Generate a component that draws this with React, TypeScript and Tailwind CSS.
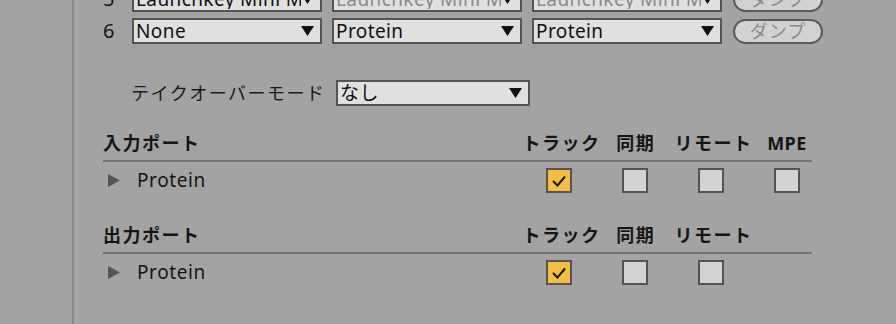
import React from "react";

const FONT = { fontFamily: '"Noto Sans", "Noto Sans CJK JP", sans-serif' };

function Arrow() {
	return (
		<svg width="13" height="10" viewBox="0 0 13 10" className="shrink-0">
			<polygon points="0,0 13,0 6.5,10" fill="#111" />
		</svg>
	);
}

function Combo({ label, dim, w = "w-[190px]" }: { label: string; dim?: boolean; w?: string }) {
	return (
		<div
			className={`${w} flex h-[26px] items-center justify-between border-2 border-[#545454] bg-[#e0e0e0] pl-[2px] pr-[6px]`}
		>
			<span
				className={`min-w-0 flex-1 overflow-hidden whitespace-nowrap text-[19px] leading-none tracking-[0.4px] ${dim ? "text-[#8a8a8a]" : "text-[#111]"}`}
			>
				{label}
			</span>
			<Arrow />
		</div>
	);
}

function DumpButton() {
	return (
		<div className="flex h-[25px] w-[90px] items-center justify-center rounded-full border-2 border-[#5a5a5a] bg-[#d2d2d2] text-[18px] leading-none tracking-[1px] text-[#8a8a8a]">
			ダンプ
		</div>
	);
}

function Check({ on }: { on?: boolean }) {
	return (
		<div
			className={`flex h-[25px] w-[26px] items-center justify-center border-2 border-[#545454] ${on ? "bg-[#f5bd42]" : "bg-[#d3d3d3]"}`}
		>
			{on && (
				<svg width="16" height="14" viewBox="0 0 16 14">
					<polyline points="2,7 6.5,11.5 14,2.5" fill="none" stroke="#1a1a1a" strokeWidth="2" />
				</svg>
			)}
		</div>
	);
}

function PortSection({ title, cols, checks }: { title: string; cols: string[]; checks: boolean[] }) {
	return (
		<div className="flex flex-col">
			<div className="flex h-[24px] items-center">
				<div className="w-[418px] text-[18px] font-bold tracking-[1.5px] text-[#151515]">{title}</div>
				{cols.map((c) => (
					<div
						key={c}
						className={`w-[76px] text-center text-[18px] font-bold whitespace-nowrap text-[#151515] ${c === "MPE" ? "tracking-[0.5px]" : "pl-[1.5px] tracking-[1.5px]"}`}
					>
						{c}
					</div>
				))}
			</div>
			<div className="mt-[5px] h-[2px] w-[709px] bg-[#737373]" />
			<div className="mt-[6px] flex h-[25px] items-center">
				<div className="flex w-[418px] items-center">
					<svg width="12" height="13" viewBox="0 0 12 13" className="ml-[5px]">
						<polygon points="0,0 12,6.5 0,13" fill="#555" />
					</svg>
					<span className="ml-[17px] text-[19px] tracking-[0.6px] text-[#151515]">Protein</span>
				</div>
				{checks.map((on, i) => (
					<div key={i} className="flex w-[76px] justify-center">
						<Check on={on} />
					</div>
				))}
			</div>
		</div>
	);
}

export default function App() {
	return (
		<div className="flex h-[324px] w-[896px] overflow-hidden bg-[#a3a3a3]" style={FONT}>
			<div className="w-[74px] shrink-0 border-r-2 border-[#8a8a8a]" />
			<div className="flex flex-col pl-[29px]">
				<div className="-mt-[14px] flex flex-col gap-[6px]">
					{[
						{ n: "5", a: "Launchkey Mini MK3", b: "Launchkey Mini MK3", c: "Launchkey Mini MK3", dim: true },
						{ n: "6", a: "None", b: "Protein", c: "Protein", dim: false },
					].map((r) => (
						<div key={r.n} className="flex items-center">
							<div className="w-[13px] text-[20px] leading-none text-[#151515]">{r.n}</div>
							<div className="ml-[16px] flex items-center gap-[10px]">
								<Combo label={r.a} />
								<Combo label={r.b} dim={r.dim} />
								<Combo label={r.c} dim={r.dim} />
							</div>
							<div className="ml-[11px]">
								<DumpButton />
							</div>
						</div>
					))}
				</div>
				<div className="mt-[36px] flex items-center pl-[28px]">
					<span className="w-[195px] whitespace-nowrap text-[18px] leading-none tracking-[1.5px] text-[#1a1a1a]">
						テイクオーバーモード
					</span>
					<div className="ml-[10px]">
						<Combo label="なし" w="w-[194px]" />
					</div>
				</div>
				<div className="mt-[25px]">
					<PortSection title="入力ポート" cols={["トラック", "同期", "リモート", "MPE"]} checks={[true, false, false, false]} />
				</div>
				<div className="mt-[30px]">
					<PortSection title="出力ポート" cols={["トラック", "同期", "リモート"]} checks={[true, false, false]} />
				</div>
			</div>
		</div>
	);
}
